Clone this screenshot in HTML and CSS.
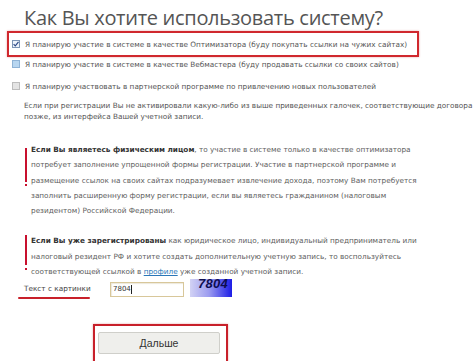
FILE: index.html
```html
<!DOCTYPE html>
<html lang="ru">
<head>
<meta charset="utf-8">
<link rel="stylesheet" href="styles.css">
</head>
<body>
<div class="page">
  <h1 class="title">Как Вы хотите использовать систему?</h1>
  <div class="opt opt-hl">
    <span class="cb cb-checked"><svg viewBox="0 0 8 8" width="8" height="8"><path d="M1.6 4.1 L3.3 5.9 L6.5 1.8" fill="none" stroke="#2e4a86" stroke-width="1.2"/></svg></span>
    <span class="opt-text">Я планирую участие в системе в качестве Оптимизатора (буду покупать ссылки на чужих сайтах)</span>
  </div>
  <div class="opt opt-2">
    <span class="cb cb-blue"></span>
    <span class="opt-text">Я планирую участие в системе в качестве Вебмастера (буду продавать ссылки со своих сайтов)</span>
  </div>
  <div class="opt">
    <span class="cb cb-gray"></span>
    <span class="opt-text">Я планирую участвовать в партнерской программе по привлечению новых пользователей</span>
  </div>
  <p class="note">Если при регистрации Вы не активировали какую-либо из выше приведенных галочек, соответствующие договора<br>позже, из интерфейса Вашей учетной записи.</p>

  <div class="info">
    <p><b>Если Вы являетесь физическим лицом</b>, то участие в системе только в качестве оптимизатора потребует заполнение упрощенной формы регистрации. Участие в партнерской программе и размещение ссылок на своих сайтах подразумевает извлечение дохода, поэтому Вам потребуется заполнить расширенную форму регистрации, если вы являетесь гражданином (налоговым резидентом) Российской Федерации.</p>
  </div>
  <div class="info info-2">
    <p><b>Если Вы уже зарегистрированы</b> как юридическое лицо, индивидуальный предприниматель или налоговый резидент РФ и хотите создать дополнительную учетную запись, то воспользуйтесь соответствующей ссылкой в <a href="#">профиле</a> уже созданной учетной записи.</p>
  </div>

  <div class="captcha-row">
    <span class="captcha-label">Текст с картинки</span>
    <span class="captcha-input">7804<span class="caret"></span></span>
    <span class="captcha-img">7804</span>
  </div>

  <div class="submit-hl">
    <button class="submit" type="button">Дальше</button>
  </div>
</div>
</body>
</html>
```
FILE: styles.css
```css
html, body {
  margin: 0;
  padding: 0;
  background: #fff;
  overflow: hidden;
}
body {
  width: 474px;
  height: 361px;
  font-family: "DejaVu Sans", Verdana, sans-serif;
  color: #555;
}
.page {
  width: 560px;
  padding: 4px 0 0 7px;
}
.title {
  margin: 0 0 0 17px;
  height: 27px;
  font-family: "Open Sans", "DejaVu Sans", sans-serif;
  font-weight: 400;
  font-size: 20px;
  line-height: 27px;
  color: #555;
  letter-spacing: -0.3px;
}
.opt {
  display: flex;
  align-items: center;
  height: 22px;
  padding-left: 5px;
  font-size: 7.3px;
  color: #555;
}
.opt-hl {
  width: 405px;
  height: 22px;
  padding-left: 3px;
  border: 2px solid #d0282e;
  box-shadow: 0 0 2px rgba(200, 40, 40, 0.4);
}
.opt-2 {
  margin-top: -4px;
}
.cb {
  display: inline-flex;
  width: 8px;
  height: 8px;
  box-sizing: border-box;
  border: 1px solid #9db4cc;
  margin-right: 5px;
  flex: none;
}
.cb-checked { background: #eef3fa; border-color: #7d95b5; }
.cb-checked svg { display: block; margin: -1px; }
.cb-blue { background: #b8d6f0; border-color: #8fb3d6; }
.cb-gray { background: #e4e4e4; border-color: #bdbdbd; }

.note {
  margin: 3px 0 0 17px;
  font-size: 7.3px;
  line-height: 11px;
  white-space: nowrap;
  color: #555;
}
.info {
  margin: 20px 0 0 18px;
  padding-left: 6px;
  position: relative;
  width: 392px;
}
.info::before {
  content: "";
  position: absolute;
  left: 0;
  top: 6px;
  height: 34px;
  width: 2px;
  background: #c8102e;
}
.info::after {
  content: "";
  position: absolute;
  left: 0;
  top: 42px;
  width: 2px;
  height: 2px;
  background: #c8102e;
}
.info-2::before { top: 2px; height: 30px; }
.info-2::after { top: 35px; }
.info p {
  margin: 0;
  font-size: 7.3px;
  line-height: 15.3px;
  color: #606060;
}
.info b { color: #333; }
.info a { color: #2a77b8; }
.info-2 { margin-top: 15px; }

.captcha-row {
  display: flex;
  align-items: center;
  margin: 0 0 0 17px;
  height: 18px;
}
.captcha-label {
  position: relative;
  font-size: 7.3px;
  color: #444;
  width: 86px;
}
.captcha-label::after {
  content: "";
  position: absolute;
  left: -6px;
  top: 13px;
  width: 72px;
  height: 2px;
  border-radius: 1px;
  background: #c8202a;
}
.captcha-input {
  display: flex;
  align-items: center;
  width: 74px;
  height: 15px;
  box-sizing: border-box;
  border: 1px solid #d8c79a;
  box-shadow: inset 1px 1px 1px rgba(180, 160, 110, 0.25);
  padding-left: 2px;
  font-size: 7px;
  color: #333;
  margin-top: 2px;
}
.caret {
  display: inline-block;
  width: 1px;
  height: 9px;
  background: #222;
}
.captcha-img {
  margin-left: 6px;
  width: 42px;
  height: 18px;
  overflow: hidden;
  background: linear-gradient(90deg, #d2d2f4 0%, #9c9cf0 45%, #1d1de6 100%);
  font-family: "Liberation Sans", Arial, sans-serif;
  font-style: italic;
  font-weight: bold;
  font-size: 13px;
  line-height: 10px;
  color: #0d0d4e;
  text-align: right;
  padding-right: 4px;
  box-sizing: border-box;
  letter-spacing: 0.3px;
}
.submit-hl {
  margin: 27px 0 0 86px;
  width: 128px;
  height: 40px;
  border: 2px solid #c8202a;
  box-shadow: 0 0 2px rgba(200, 40, 40, 0.4);
  padding: 6px 0 0 3px;
  box-sizing: content-box;
}
.submit {
  display: block;
  width: 122px;
  height: 22px;
  background: #efefec;
  border: 1px solid #cfcfca;
  border-radius: 2px;
  font-family: "Liberation Sans", Arial, sans-serif;
  font-size: 10.5px;
  color: #333;
  padding: 0;
}
```
